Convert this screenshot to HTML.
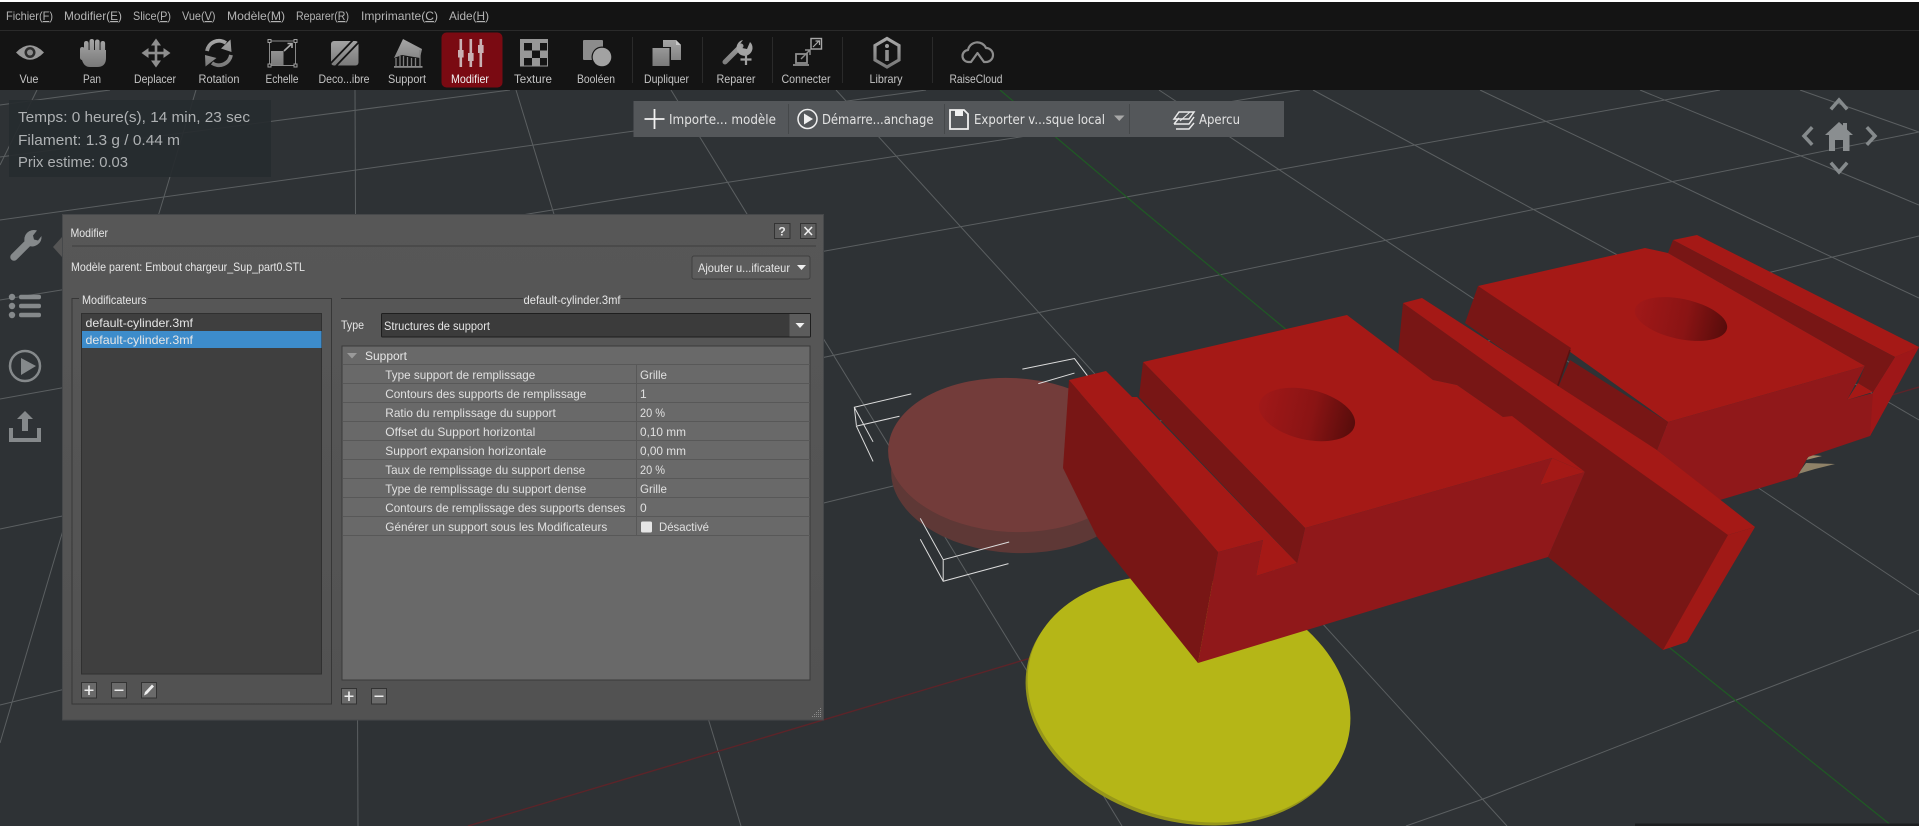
<!DOCTYPE html>
<html lang="fr">
<head>
<meta charset="utf-8">
<title>Modifier</title>
<style>
html,body{margin:0;padding:0;background:#2e3235;overflow:hidden;width:1919px;height:826px}
svg{display:block;position:absolute;left:0;top:0}
text{font-family:"Liberation Sans",sans-serif;font-size:12px;white-space:pre}
.m{fill:#b4b4b4;font-size:12px}
.t{fill:#c4c4c4;font-size:12px;text-anchor:middle}
.a{fill:#e2e2e2;font-family:"DejaVu Sans",sans-serif;font-size:13px}
.i{fill:#aeb1b3;font-size:14.5px}
.d{fill:#e6e6e6;font-size:12px}
.r{fill:#e0e0e0;font-size:12px}
.g{stroke:#5b5f61;stroke-width:1;fill:none}
.w{stroke:#dcdcdc;stroke-width:1;fill:none;vector-effect:non-scaling-stroke}
</style>
</head>
<body>
<svg width="1919" height="826" viewBox="0 0 1919 826" xmlns="http://www.w3.org/2000/svg">
<defs>
<linearGradient id="gu" gradientUnits="userSpaceOnUse" x1="0" y1="38" x2="0" y2="68"><stop offset="0" stop-color="#a8a8a8"/><stop offset="1" stop-color="#767676"/></linearGradient>
<linearGradient id="dlg" x1="0" y1="0" x2="0" y2="1"><stop offset="0" stop-color="#575757"/><stop offset="1" stop-color="#525252"/></linearGradient>
<linearGradient id="hole" x1="0" y1="0" x2="1" y2="0"><stop offset="0" stop-color="#a01818"/><stop offset=".55" stop-color="#8a1414"/><stop offset="1" stop-color="#570c0b"/></linearGradient>
</defs>

<!-- viewport background -->
<rect width="1919" height="826" fill="#2e3235"/>

<!-- grid: family A -->
<g class="g">
<path d="M0 105L110 90"/>
<path d="M0 157L510 90"/>
<path d="M0 220L926 90"/>
<path d="M0 300L620 199L1020 137L1300 90"/>
<path d="M0 399L1260 173L1720 90"/>
<path d="M0 529L1531 210L1919 132"/>
<path d="M0 705L889 487L1919 236"/>
<path d="M1406 826L1483 799L1739 699L1919 630"/>
<!-- family B -->
<path d="M37 90L0 165"/>
<path d="M196 90L163 200L61 537L0 743"/>
<path d="M355 90L358 826"/>
<path d="M516 90L741 826"/>
<path d="M671 90L1122 826"/>
<path d="M836 90L1507 826"/>
<path d="M1159 90L1340 210L1760 489L1919 595"/>
<path d="M1313 90L1553 220L1890 403L1919 420"/>
<path d="M1480 90L1753 220L1919 298"/>
<path d="M1640 90L1760 139L1883 190L1919 205"/>
<path d="M1800 90L1919 132"/>
</g>
<path d="M1000 90L1142 210L1670 648L1892 826" stroke="#1f5a24" stroke-width="1.2" fill="none"/>
<path d="M468 826L1024 660L1892 395L1919 387" stroke="#5c2429" stroke-width="1.4" fill="none"/>

<!-- brown cylinder -->
<ellipse cx="1015" cy="476" rx="124" ry="77" transform="rotate(3 1015 476)" fill="#5e3836"/>
<ellipse cx="1012" cy="455" rx="124" ry="77" transform="rotate(3 1012 455)" fill="#733c3a"/>

<!-- yellow cylinder -->
<ellipse cx="1187" cy="702" rx="164" ry="120" transform="rotate(15 1187 702)" fill="#96961a"/>
<ellipse cx="1189" cy="699" rx="164" ry="120" transform="rotate(15 1189 699)" fill="#b5b617"/>

<!-- white bounding box corners -->
<g transform="translate(830,210) scale(.6945,.3929)">
  <path class="w" d="M117 468L35 502L38 548M100 525L38 550L62 640M35 502L62 590"/>
  <path class="w" d="M277 405L352 378L372 425M300 442L352 415"/>
  <path class="w" d="M130 785L163 890L258 845M130 838L163 945L257 900M163 890V945"/>
</g>

<!-- beige fragment -->
<polygon points="1798,474 1806,463 1835,464 1815,469" fill="#8f8268"/>
<polygon points="1810,455 1822,456 1806,460" fill="#a08a6a"/>

<!-- back block -->
<polygon points="1668,422 1865,366 1847,400 1873,393 1895,357 1919,347 1870,436 1808,457 1797,477 1720,500 1657,450" fill="#90181a"/>
<polygon points="1858,383 1873,392 1847,400" fill="#a51916"/>
<polygon points="1895,357 1919,347 1870,436 1873,392" fill="#9e1718"/>
<polygon points="1673,240 1697,235 1919,347 1895,357" fill="#a51916"/>
<polygon points="1673,240 1895,357 1873,392 1858,383 1865,366 1668,253" fill="#781615"/>
<polygon points="1478,286 1645,248 1668,253 1865,366 1668,422" fill="#a51916"/>
<polygon points="1478,286 1571,348 1557,388 1465,323" fill="#781615"/>
<polygon points="1570,360 1668,422 1657,450 1575,398 1557,390" fill="#781615"/>
<path d="M1570 350L1557 388" stroke="#5a1110" stroke-width="1.500"/>

<!-- central plate -->
<polygon points="1403,303 1398,355 1433,380 1457,385 1503,417 1585,472 1548,557 1663,650 1729,535" fill="#781615"/>
<polygon points="1403,303 1422,298 1657,450 1755,527 1728,535" fill="#a51916"/>
<polygon points="1728,535 1755,527 1687,642 1663,650" fill="#a01916"/>

<!-- front block -->
<polygon points="1218,552 1263,540 1256,576 1297,563 1305,528 1552,458 1540,485 1585,472 1548,557 1198,663" fill="#90181a"/>
<polygon points="1069,380 1218,552 1198,663 1097,537 1063,468" fill="#781615"/>
<polygon points="1143,362 1347,315 1400,355 1433,380 1457,385 1503,417 1512,416 1585,472 1552,458 1305,528" fill="#a51916"/>
<polygon points="1143,362 1305,528 1297,563 1139,397" fill="#781615"/>
<polygon points="1069,380 1106,371 1132,397 1137,397 1297,563 1256,576 1263,540 1218,552" fill="#a51916"/>
<polygon points="1552,458 1585,472 1540,485" fill="#a51916"/>

<!-- holes -->
<ellipse cx="1307" cy="414.500" rx="49" ry="25" transform="rotate(13 1307 414.500)" fill="url(#hole)"/>
<ellipse cx="1681" cy="319" rx="47" ry="20" transform="rotate(12 1681 319)" fill="url(#hole)"/>

<rect x="1635" y="823.500" width="284" height="2.500" fill="#1c1e20"/>

<!-- menu bar -->
<rect width="1919" height="90" fill="#141414"/>
<rect width="1919" height="2" fill="#ffffff"/>
<rect y="30" width="1919" height="1" fill="#2a2a2a"/>
<text class="m" x="6" y="20" textLength="47" lengthAdjust="spacingAndGlyphs">Fichier(<tspan text-decoration="underline">F</tspan>)</text>
<text class="m" x="64" y="20" textLength="58" lengthAdjust="spacingAndGlyphs">Modifier(<tspan text-decoration="underline">E</tspan>)</text>
<text class="m" x="133" y="20" textLength="38" lengthAdjust="spacingAndGlyphs">Slice(<tspan text-decoration="underline">P</tspan>)</text>
<text class="m" x="182" y="20" textLength="33.500" lengthAdjust="spacingAndGlyphs">Vue(<tspan text-decoration="underline">V</tspan>)</text>
<text class="m" x="227" y="20" textLength="58" lengthAdjust="spacingAndGlyphs">Modèle(<tspan text-decoration="underline">M</tspan>)</text>
<text class="m" x="296" y="20" textLength="53" lengthAdjust="spacingAndGlyphs">Reparer(<tspan text-decoration="underline">R</tspan>)</text>
<text class="m" x="361" y="20" textLength="77" lengthAdjust="spacingAndGlyphs">Imprimante(<tspan text-decoration="underline">C</tspan>)</text>
<text class="m" x="449" y="20" textLength="40" lengthAdjust="spacingAndGlyphs">Aide(<tspan text-decoration="underline">H</tspan>)</text>

<!-- toolbar highlighted button -->
<rect x="441.500" y="32.500" width="61" height="55" rx="5" fill="#7a0a12"/>

<!-- toolbar labels -->
<text class="t" x="29" y="83" textLength="19" lengthAdjust="spacingAndGlyphs">Vue</text>
<text class="t" x="92" y="83" textLength="18" lengthAdjust="spacingAndGlyphs">Pan</text>
<text class="t" x="155" y="83" textLength="42" lengthAdjust="spacingAndGlyphs">Deplacer</text>
<text class="t" x="219" y="83" textLength="41" lengthAdjust="spacingAndGlyphs">Rotation</text>
<text class="t" x="282" y="83" textLength="33" lengthAdjust="spacingAndGlyphs">Echelle</text>
<text class="t" x="344" y="83" textLength="51" lengthAdjust="spacingAndGlyphs">Deco...ibre</text>
<text class="t" x="407" y="83" textLength="38" lengthAdjust="spacingAndGlyphs">Support</text>
<text class="t" x="470" y="83" textLength="38" lengthAdjust="spacingAndGlyphs" style="fill:#f0f0f0">Modifier</text>
<text class="t" x="533" y="83" textLength="38" lengthAdjust="spacingAndGlyphs">Texture</text>
<text class="t" x="596" y="83" textLength="38" lengthAdjust="spacingAndGlyphs">Booléen</text>
<text class="t" x="666.500" y="83" textLength="45" lengthAdjust="spacingAndGlyphs">Dupliquer</text>
<text class="t" x="736" y="83" textLength="39" lengthAdjust="spacingAndGlyphs">Reparer</text>
<text class="t" x="806" y="83" textLength="49" lengthAdjust="spacingAndGlyphs">Connecter</text>
<text class="t" x="886" y="83" textLength="33" lengthAdjust="spacingAndGlyphs">Library</text>
<text class="t" x="976" y="83" textLength="53" lengthAdjust="spacingAndGlyphs">RaiseCloud</text>

<!-- toolbar separators -->
<g fill="#2a2a2a">
<rect x="632" y="37" width="1" height="46"/><rect x="702" y="37" width="1" height="46"/>
<rect x="772" y="37" width="1" height="46"/><rect x="842" y="37" width="1" height="46"/>
<rect x="932" y="37" width="1" height="46"/>
</g>

<!-- toolbar icons -->
<!-- eye -->
<path d="M16 52.500Q30 38 44 52.500Q30 67 16 52.500Z" fill="#989898"/>
<circle cx="30" cy="52.500" r="5.500" fill="#2c2c2c"/><circle cx="30" cy="52.500" r="3" fill="#8c8c8c"/>
<!-- hand -->
<g fill="url(#gu)">
<path d="M81 50H106V58Q106 67 97 67H90Q84 67 82 60Z"/>
<rect x="84" y="41" width="4.600" height="14" rx="2.200"/><rect x="89.500" y="39" width="4.600" height="14" rx="2.200"/>
<rect x="95" y="39.500" width="4.600" height="14" rx="2.200"/><rect x="100.500" y="41" width="4.600" height="14" rx="2.200"/>
<rect x="80" y="47" width="4.500" height="13" rx="2.200"/>
</g>
<!-- move -->
<g fill="#8e8e8e">
<rect x="146" y="51.700" width="20" height="2.600"/><rect x="154.700" y="43" width="2.600" height="20"/>
<path d="M156 38.500L161 45.500H151ZM156 67.500L161 60.500H151ZM141.500 53L148.500 48V58ZM170.500 53L163.500 48V58Z"/>
</g>
<!-- rotate -->
<path d="M207 51A12.200 12.200 0 0 1 226 43" stroke="url(#gu)" stroke-width="3.800" fill="none"/>
<path d="M230.500 39.500L231.500 52L221 48.500Z" fill="url(#gu)"/>
<path d="M231 55A12.200 12.200 0 0 1 212 63" stroke="url(#gu)" stroke-width="3.800" fill="none"/>
<path d="M205.500 66.500L205 55L216.500 58Z" fill="url(#gu)"/>
<!-- scale -->
<rect x="269.500" y="41" width="26" height="24.500" stroke="#8a8a8a" stroke-width="1" fill="none"/>
<rect x="271" y="51" width="12.500" height="14" fill="url(#gu)"/>
<path d="M284 51L291.500 44M287.500 43.500h4.500v4.500" stroke="#aaa" stroke-width="1.600" fill="none"/>
<g stroke="#a0a0a0" fill="#141414" stroke-width="1"><rect x="268" y="39.500" width="3" height="3"/><rect x="294" y="39.500" width="3" height="3"/><rect x="268" y="64" width="3" height="3"/><rect x="294" y="64" width="3" height="3"/></g>
<!-- deco -->
<rect x="331" y="41" width="27.500" height="24.500" rx="3" fill="url(#gu)"/>
<path d="M330 64L354 39M335 67L359 42" stroke="#141414" stroke-width="1.800"/>
<!-- support -->
<polygon points="394,58 403,39 422,49 420,58 402,55" fill="url(#gu)"/>
<path d="M396 58V66M400 56V66M403.500 56V66M407.500 57V66M411.500 58V66M415.500 58V66M420 50V66" stroke="#808080" stroke-width="1.300"/>
<rect x="394" y="66" width="28.500" height="1.800" fill="#888"/>
<!-- sliders -->
<g fill="#c9b0b3">
<rect x="459.500" y="39" width="2.600" height="28"/><rect x="469.500" y="39" width="2.600" height="28"/><rect x="479.500" y="39" width="2.600" height="28"/>
<rect x="458" y="50" width="5.600" height="7.500"/><rect x="468" y="53" width="5.600" height="8"/><rect x="478" y="45" width="5.600" height="8"/>
</g>
<!-- texture -->
<rect x="520" y="39" width="28" height="27.500" fill="#979797"/>
<g fill="#141414"><rect x="524" y="43" width="8" height="7.500"/><rect x="540" y="43" width="7" height="7.500"/><rect x="532" y="50.500" width="8" height="7.500"/><rect x="524" y="58" width="8" height="7.500"/><rect x="540" y="58" width="7" height="7.500"/></g>
<!-- boolean -->
<rect x="583" y="40" width="20" height="20" rx="1" fill="#8c8c8c"/>
<circle cx="602" cy="57" r="10.500" fill="#141414"/>
<circle cx="602" cy="57" r="9.300" fill="#a2a2a2"/>
<!-- duplicate -->
<path d="M663 40h13l5 5v15h-18z" fill="url(#gu)"/>
<path d="M676 40l5 5h-5z" fill="#c8c8c8"/>
<rect x="651" y="47" width="20" height="20" fill="#141414"/>
<rect x="652.500" y="48" width="17" height="18" fill="url(#gu)"/>
<!-- repair -->
<path d="M725 62L741 46" stroke="url(#gu)" stroke-width="5" stroke-linecap="round"/>
<path d="M750 42a8 8 0 1 1-7-2l-3 4 2 4 5 1z" fill="#a4a4a4"/>
<path d="M746 54v11M740.500 59.500h11" stroke="#a0a0a0" stroke-width="2.200"/>
<!-- connect -->
<rect x="796" y="54" width="11" height="9" fill="none" stroke="#8e8e8e" stroke-width="1.800"/>
<path d="M793 66h16v-2h-16z" fill="#808080"/>
<rect x="811" y="38.500" width="10.500" height="10.500" fill="none" stroke="#a8a8a8" stroke-width="1.400"/>
<path d="M813 47l6.500-6.500M815.500 41h4v4" stroke="#a8a8a8" stroke-width="1.200" fill="none"/>
<path d="M801 59L810 50M805 50h5v5" stroke="#8e8e8e" stroke-width="1.400" fill="none"/>
<!-- library -->
<path d="M887 38.500L899 45.500V60L887 67L875 60V45.500Z" fill="none" stroke="url(#gu)" stroke-width="3.200"/>
<rect x="885.200" y="50" width="3.600" height="11" fill="#909090"/><circle cx="887" cy="46" r="2" fill="#a0a0a0"/>
<!-- cloud -->
<path d="M969 62a6 6 0 0 1-1-12a9.500 9.500 0 0 1 18-2a7 7 0 0 1 0 14h-2l-6.500-9-6.500 9z" fill="none" stroke="#8c8c8c" stroke-width="2.200" stroke-linejoin="round"/>

<!-- info panel -->
<rect x="9" y="100" width="262" height="77" fill="#262b2f" fill-opacity=".92"/>
<text class="i" x="18" y="122" textLength="232" lengthAdjust="spacingAndGlyphs">Temps: 0 heure(s), 14 min, 23 sec</text>
<text class="i" x="18" y="145" textLength="162" lengthAdjust="spacingAndGlyphs">Filament: 1.3 g / 0.44 m</text>
<text class="i" x="18" y="167" textLength="110" lengthAdjust="spacingAndGlyphs">Prix estime: 0.03</text>

<!-- action bar -->
<rect x="633.500" y="101" width="650.500" height="36" fill="#54575a"/>
<g fill="#45484a"><rect x="788" y="104" width="1" height="30"/><rect x="944" y="104" width="1" height="30"/><rect x="1129" y="104" width="1" height="30"/></g>
<path d="M644.500 119H664.500M654.500 109V129" stroke="#f2f2f2" stroke-width="1.800"/>
<text class="a" x="669" y="124" textLength="107" lengthAdjust="spacingAndGlyphs">Importe... modèle</text>
<circle cx="807.500" cy="119" r="9.500" fill="none" stroke="#efefef" stroke-width="1.500"/>
<path d="M804 113.500L813 119L804 124.500Z" fill="#efefef"/>
<text class="a" x="822" y="124" textLength="111.500" lengthAdjust="spacingAndGlyphs">Démarre...anchage</text>
<path d="M950 110h14l4 4v15h-18z" fill="none" stroke="#efefef" stroke-width="1.800"/>
<rect x="955" y="110" width="8" height="6" fill="#efefef"/>
<text class="a" x="974" y="124" textLength="131" lengthAdjust="spacingAndGlyphs">Exporter v...sque local</text>
<path d="M1114 115.500h10.500l-5.250 5.500z" fill="#a8a8a8"/>
<path d="M1174 119l5-7h15l-5 7zM1174 124l5-6M1194 117l-5 7h-15M1176 129h13l5-6" fill="none" stroke="#eaeaea" stroke-width="1.500"/>
<path d="M1180 121l10-9" stroke="#eaeaea" stroke-width="1"/>
<text class="a" x="1199" y="124" textLength="41" lengthAdjust="spacingAndGlyphs">Apercu</text>

<!-- navigation widget -->
<g stroke="#858a8c" stroke-width="3.500" fill="none" stroke-linecap="square">
<path d="M1832 108L1839 100L1846 108"/>
<path d="M1811 128.500L1804 136L1811 143.500"/>
<path d="M1868 128.500L1875 136L1868 143.500"/>
<path d="M1832 164L1839 172L1846 164"/>
</g>
<path d="M1825 135L1839 122L1843 125.500V123H1847V129.500L1853 135H1849.500V151H1843V140H1835V151H1829V135Z" fill="#8a8e90"/>

<!-- left sidebar -->
<g fill="#85898b">
<path d="M14 257L29 242" stroke="#85898b" stroke-width="7.500" stroke-linecap="round"/>
<path d="M41.500 236a9.500 9.500 0 0 1-13.500 9.500l-3-2.500a9.500 9.500 0 0 1 12-12.500l-4 5 1 4 4 1z"/>
<circle cx="12" cy="297" r="3.200"/><circle cx="12" cy="306" r="3.200"/><circle cx="12" cy="315" r="3.200"/>
<rect x="19" y="294.800" width="22" height="4.400" rx="2"/><rect x="19" y="303.800" width="22" height="4.400" rx="2"/><rect x="19" y="312.800" width="22" height="4.400" rx="2"/>
<path d="M21 358L36 366L21 375Z"/>
<path d="M25 411L33 419H28V431H22V419H17Z"/>
<path d="M9 428H13V438H37V428H41V442H9Z"/>
</g>
<circle cx="25" cy="366" r="15" fill="none" stroke="#85898b" stroke-width="2.500"/>

<!-- dialog -->
<polygon points="53,247 62,237 62,257" fill="#555"/>
<rect x="62" y="214" width="761.500" height="506" fill="url(#dlg)"/>
<rect x="62.500" y="214.500" width="761" height="505.500" fill="none" stroke="#46484a"/>
<text class="d" x="70.500" y="237" textLength="37.500" lengthAdjust="spacingAndGlyphs">Modifier</text>
<rect x="72" y="245.500" width="744" height="1" fill="#3e3e3e"/>
<rect x="774.500" y="223.500" width="15.500" height="15" fill="#5e5e5e" stroke="#333"/>
<text x="782" y="235.500" text-anchor="middle" style="font-size:12px;font-weight:bold" fill="#e8e8e8">?</text>
<rect x="800.500" y="223.500" width="15.500" height="15" fill="#5e5e5e" stroke="#333"/>
<path d="M804.500 227L812 235M812 227L804.500 235" stroke="#eee" stroke-width="1.600"/>

<text class="d" x="71" y="271" textLength="234" lengthAdjust="spacingAndGlyphs">Modèle parent: Embout chargeur_Sup_part0.STL</text>

<rect x="692" y="256" width="118" height="23" rx="2" fill="#5c5c5c" stroke="#3f3f3f"/>
<text class="d" x="698" y="272" textLength="92" lengthAdjust="spacingAndGlyphs">Ajouter u...ificateur</text>
<path d="M797 265h9l-4.500 5z" fill="#f0f0f0"/>

<!-- left group -->
<path d="M79 298.500H72V704H331.500V298.500H148" fill="none" stroke="#373737"/>
<text class="d" x="82" y="304" textLength="64.500" lengthAdjust="spacingAndGlyphs">Modificateurs</text>
<rect x="81.500" y="313.500" width="240" height="360.500" fill="#3f3f3f" stroke="#303030"/>
<rect x="82" y="331" width="239.500" height="17" fill="#3d8ccb"/>
<text class="d" x="85.500" y="327" textLength="107.500" lengthAdjust="spacingAndGlyphs">default-cylinder.3mf</text>
<text class="d" x="85.500" y="344" textLength="107.500" lengthAdjust="spacingAndGlyphs">default-cylinder.3mf</text>
<g fill="#6a6a6a" stroke="#333">
<rect x="81.500" y="682.500" width="15" height="15.500"/><rect x="111.500" y="682.500" width="15" height="15.500"/><rect x="141.500" y="682.500" width="15" height="15.500"/>
<rect x="341.500" y="688.500" width="15" height="15.500"/><rect x="371.500" y="688.500" width="15" height="15.500"/>
</g>
<path d="M89 685.500V695M84.500 690.250H93.500M114.500 690.250H123.500M349 691.500V701M344.500 696.250H353.500M374.500 696.250H383.500" stroke="#eee" stroke-width="1.600"/>
<path d="M144 695.500L145 692L152 684.500L154 686.500L147 694Z" fill="#eee"/>

<!-- right group -->
<rect x="341" y="298" width="182" height="1" fill="#373737"/>
<rect x="621" y="298" width="190" height="1" fill="#373737"/>
<text class="d" x="523.500" y="304" textLength="97" lengthAdjust="spacingAndGlyphs">default-cylinder.3mf</text>
<text class="d" x="341" y="329" textLength="23" lengthAdjust="spacingAndGlyphs">Type</text>
<rect x="381.500" y="313.500" width="429" height="23.500" rx="1" fill="#3b3b3b" stroke="#1e1e1e"/>
<rect x="789.500" y="314" width="20.500" height="22.500" fill="#5c5c5c"/>
<path d="M795.500 323h9l-4.500 5z" fill="#f0f0f0"/>
<text class="d" x="384" y="330" textLength="106" lengthAdjust="spacingAndGlyphs">Structures de support</text>

<!-- tree -->
<rect x="342" y="346" width="468" height="334" fill="#696969" stroke="#3a3a3a"/>
<path d="M347 353H357L352 358.500Z" fill="#9a9a9a"/>
<text class="d" x="365" y="360" textLength="42" lengthAdjust="spacingAndGlyphs">Support</text>
<g fill="#585858">
<rect x="343" y="364" width="467" height="1"/><rect x="343" y="383" width="467" height="1"/><rect x="343" y="402" width="467" height="1"/>
<rect x="343" y="421" width="467" height="1"/><rect x="343" y="440" width="467" height="1"/><rect x="343" y="459" width="467" height="1"/>
<rect x="343" y="478" width="467" height="1"/><rect x="343" y="497" width="467" height="1"/><rect x="343" y="516" width="467" height="1"/>
<rect x="343" y="535" width="467" height="1"/><rect x="636" y="365" width="1" height="170"/>
</g>
<text class="r" x="385.300" y="379" textLength="150" lengthAdjust="spacingAndGlyphs">Type support de remplissage</text>
<text class="r" x="385.300" y="398" textLength="201" lengthAdjust="spacingAndGlyphs">Contours des supports de remplissage</text>
<text class="r" x="385.300" y="417" textLength="170.500" lengthAdjust="spacingAndGlyphs">Ratio du remplissage du support</text>
<text class="r" x="385.300" y="436" textLength="150" lengthAdjust="spacingAndGlyphs">Offset du Support horizontal</text>
<text class="r" x="385.300" y="455" textLength="161" lengthAdjust="spacingAndGlyphs">Support expansion horizontale</text>
<text class="r" x="385.300" y="474" textLength="200" lengthAdjust="spacingAndGlyphs">Taux de remplissage du support dense</text>
<text class="r" x="385.300" y="493" textLength="201" lengthAdjust="spacingAndGlyphs">Type de remplissage du support dense</text>
<text class="r" x="385.300" y="512" textLength="240" lengthAdjust="spacingAndGlyphs">Contours de remplissage des supports denses</text>
<text class="r" x="385.300" y="531" textLength="222" lengthAdjust="spacingAndGlyphs">Générer un support sous les Modificateurs</text>
<text class="r" x="640" y="379" textLength="27" lengthAdjust="spacingAndGlyphs">Grille</text>
<text class="r" x="640" y="398">1</text>
<text class="r" x="640" y="417" textLength="25" lengthAdjust="spacingAndGlyphs">20 %</text>
<text class="r" x="640" y="436" textLength="46" lengthAdjust="spacingAndGlyphs">0,10 mm</text>
<text class="r" x="640" y="455" textLength="46" lengthAdjust="spacingAndGlyphs">0,00 mm</text>
<text class="r" x="640" y="474" textLength="25" lengthAdjust="spacingAndGlyphs">20 %</text>
<text class="r" x="640" y="493" textLength="27" lengthAdjust="spacingAndGlyphs">Grille</text>
<text class="r" x="640" y="512">0</text>
<rect x="641" y="521.500" width="11" height="11" rx="1.500" fill="#e6e6e6"/>
<text class="r" x="659" y="531" textLength="50" lengthAdjust="spacingAndGlyphs">Désactivé</text>

<!-- resize grip -->
<g fill="#8a8a8a">
<rect x="820" y="708" width="1" height="1"/><rect x="818" y="710" width="1" height="1"/><rect x="820" y="710" width="1" height="1"/>
<rect x="816" y="712" width="1" height="1"/><rect x="818" y="712" width="1" height="1"/><rect x="820" y="712" width="1" height="1"/>
<rect x="814" y="714" width="1" height="1"/><rect x="816" y="714" width="1" height="1"/><rect x="818" y="714" width="1" height="1"/><rect x="820" y="714" width="1" height="1"/>
<rect x="812" y="716" width="1" height="1"/><rect x="814" y="716" width="1" height="1"/><rect x="816" y="716" width="1" height="1"/><rect x="818" y="716" width="1" height="1"/><rect x="820" y="716" width="1" height="1"/>
</g>
</svg>
</body>
</html>
